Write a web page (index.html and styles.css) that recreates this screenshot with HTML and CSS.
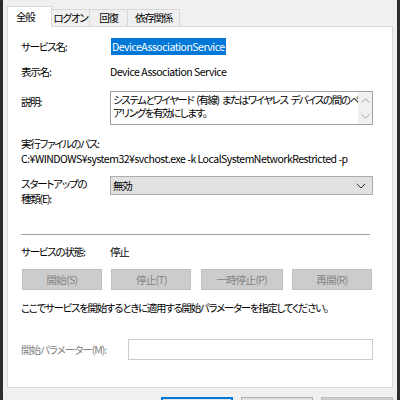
FILE: index.html
```html
<!DOCTYPE html>
<html lang="ja">
<head>
<meta charset="utf-8">
<title>DeviceAssociationService のプロパティ</title>
<link rel="stylesheet" href="styles.css">
</head>
<body>
<div class="window">
  <div class="edge"></div>
  <div class="dialog">
    <div class="tabs">
      <div class="tab tab-active">全般</div>
      <div class="tab tab-w38">ログオン</div>
      <div class="tab tab-w38">回復</div>
      <div class="tab tab-w52">依存関係</div>
    </div>
    <div class="panel">
      <div class="row r-name">
        <div class="label">サービス名:</div>
        <div class="value latin"><span class="selected">DeviceAssociationService</span></div>
      </div>
      <div class="row r-display">
        <div class="label">表示名:</div>
        <div class="value latin">Device Association Service</div>
      </div>
      <div class="row r-desc">
        <div class="label label-desc">説明:</div>
        <div class="descbox">
          <div class="desctext">システムとワイヤード (有線) またはワイヤレス デバイスの間のペ<br>アリングを有効にします。</div>
          <div class="scrollbar">
            <svg class="sb-arrow" width="9" height="5" viewBox="0 0 9 5"><path d="M0.5 4.5 L4.5 0.8 L8.5 4.5" fill="none" stroke="#a3a3a3" stroke-width="1"/></svg>
            <svg class="sb-arrow" width="9" height="5" viewBox="0 0 9 5"><path d="M0.5 0.5 L4.5 4.2 L8.5 0.5" fill="none" stroke="#a3a3a3" stroke-width="1"/></svg>
          </div>
        </div>
      </div>
      <div class="pathlabel">実行ファイルのパス:</div>
      <div class="path latin">C:¥WINDOWS¥system32¥svchost.exe -k LocalSystemNetworkRestricted -p</div>
      <div class="row r-startup">
        <div class="label label-startup">スタートアップの<br>種類(E):</div>
        <div class="select">
          <span class="select-text">無効</span>
          <svg class="chev" width="10" height="6" viewBox="0 0 10 6"><path d="M0.8 0.8 L5 5 L9.2 0.8" fill="none" stroke="#333" stroke-width="1"/></svg>
        </div>
      </div>
      <div class="separator"></div>
      <div class="row r-status">
        <div class="label">サービスの状態:</div>
        <div class="value status">停止</div>
      </div>
      <div class="buttons">
        <div class="btn w80">開始(S)</div>
        <div class="btn w80">停止(T)</div>
        <div class="btn w82">一時停止(P)</div>
        <div class="btn w80">再開(R)</div>
      </div>
      <div class="hint">ここでサービスを開始するときに適用する開始パラメーターを指定してください。</div>
      <div class="row r-param">
        <div class="label label-param">開始パラメーター(M):</div>
        <div class="input"></div>
      </div>
    </div>
    <div class="footer">
      <div class="fbtn fbtn-default">OK</div>
      <div class="fbtn">キャンセル</div>
      <div class="fbtn fbtn-disabled">適用(A)</div>
    </div>
  </div>
  <div class="edge"></div>
</div>
</body>
</html>
```

FILE: styles.css
```css
html, body {
  margin: 0;
  padding: 0;
}
body {
  width: 400px;
  height: 400px;
  overflow: hidden;
  font-family: "Noto Sans CJK JP", "Noto Sans", sans-serif;
  font-size: 10.5px;
  font-feature-settings: "palt";
  letter-spacing: -1.2px;
  color: #000;
  background: #f0f0f0;
}
.latin {
  letter-spacing: -0.5px;
}
.window {
  display: flex;
  width: 400px;
  height: 400px;
}
.edge {
  width: 3px;
  background: #2d2d2d;
  flex: none;
}
.dialog {
  flex: 1;
  min-width: 0;
  overflow: hidden;
  background: #f0f0f0;
  padding: 6px 4px 0 4px;
  display: flex;
  flex-direction: column;
}
.tabs {
  flex: none;
  display: flex;
  align-items: flex-end;
  height: 20px;
  position: relative;
  z-index: 1;
}
.tab {
  box-sizing: border-box;
  height: 17px;
  line-height: 15px;
  text-align: center;
  white-space: nowrap;
  border-top: 1px solid #d9d9d9;
  border-right: 1px solid #d9d9d9;
  background: #f0f0f0;
}
.tab-active {
  width: 45px;
  height: 21px;
  margin-bottom: -1px;
  line-height: 20px;
  text-align: left;
  padding-left: 8px;
  background: #fff;
  border-left: 1px solid #d9d9d9;
}
.tab-w38 { width: 38px; }
.tab-w52 { width: 52px; }
.panel {
  flex: none;
  box-sizing: border-box;
  height: 362px;
  overflow: hidden;
  background: #fff;
  border: 1px solid #d9d9d9;
  padding: 12px 19px 0 13px;
  display: flex;
  flex-direction: column;
}
.row {
  display: flex;
  flex: none;
}
.label {
  width: 89px;
  flex: none;
  line-height: 16px;
  white-space: nowrap;
}
.value {
  line-height: 16px;
  white-space: nowrap;
}
.selected {
  background: #0078d7;
  color: #fff;
  margin-left: 1px;
  padding: 1px 1px;
}
.r-display { margin-top: 9px; }
.r-desc { margin-top: 11px; }
.label-desc { padding-top: 3px; }
.descbox {
  box-sizing: border-box;
  flex: 1;
  min-width: 0;
  height: 34px;
  border: 1px solid #a0a0a0;
  display: flex;
}
.desctext {
  flex: 1;
  min-width: 0;
  padding: 2px 0 0 2px;
  line-height: 12.5px;
  letter-spacing: -1.4px;
  word-spacing: 2px;
  white-space: nowrap;
  overflow: hidden;
}
.scrollbar {
  flex: none;
  width: 14px;
  background: #f0f0f0;
  display: flex;
  flex-direction: column;
  justify-content: space-between;
  align-items: center;
  padding: 6px 0 5px 0;
}
.sb-arrow { display: block; }
.pathlabel {
  flex: none;
  margin-top: 11px;
  line-height: 16px;
}
.path {
  flex: none;
  margin-top: -1px;
  line-height: 16px;
  white-space: nowrap;
}
.r-startup { margin-top: 9px; }
.label-startup { line-height: 15px; }
.select {
  box-sizing: border-box;
  flex: 1;
  height: 19px;
  background: #e1e1e1;
  border: 1px solid #adadad;
  display: flex;
  align-items: center;
  justify-content: space-between;
  padding: 0 6px 0 2px;
}
.select-text { line-height: 16px; }
.chev { display: block; }
.separator {
  flex: none;
  margin: 28px 3px 0 0;
  height: 1px;
  background: #a0a0a0;
}
.r-status { margin-top: 9px; }
.buttons {
  flex: none;
  margin-top: 9px;
  padding: 0 1px;
  display: flex;
  justify-content: space-between;
}
.btn {
  box-sizing: border-box;
  height: 21px;
  line-height: 19px;
  text-align: center;
  white-space: nowrap;
  letter-spacing: -0.7px;
  border: 1px solid #bfbfbf;
  background: #cccccc;
  color: #838383;
}
.w80 { width: 80px; }
.w82 { width: 82px; }
.hint {
  flex: none;
  margin-top: 10px;
  line-height: 16px;
  white-space: nowrap;
  letter-spacing: -1.3px;
}
.r-param {
  margin-top: 23px;
  align-items: center;
}
.label-param {
  width: 107px;
  letter-spacing: -1px;
  color: #838383;
}
.input {
  box-sizing: border-box;
  flex: 1;
  height: 21px;
  border: 1px solid #cccccc;
  background: #fff;
}
.footer {
  flex: none;
  margin-top: 9px;
  display: flex;
  justify-content: flex-end;
  gap: 8px;
}
.fbtn {
  box-sizing: border-box;
  width: 72px;
  height: 23px;
  line-height: 26px;
  text-align: center;
  white-space: nowrap;
  background: #e1e1e1;
  border: 1px solid #adadad;
}
.fbtn-default {
  border: 2px solid #0078d7;
}
.fbtn-disabled {
  background: #cccccc;
  border-color: #bfbfbf;
  color: #838383;
}
```
